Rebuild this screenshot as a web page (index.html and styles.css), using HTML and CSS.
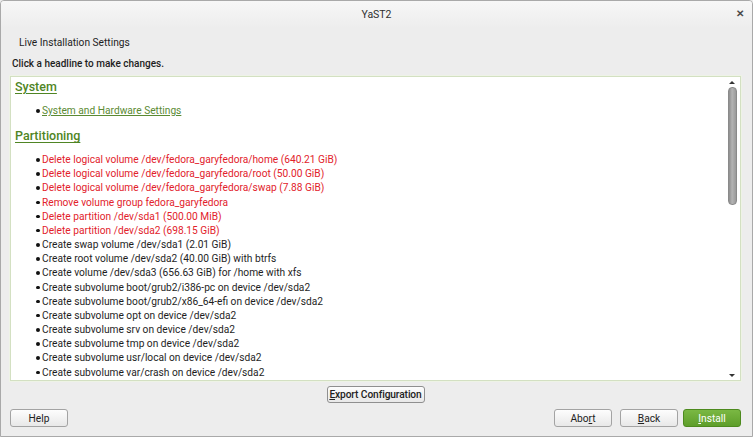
FILE: index.html
```html
<!DOCTYPE html>
<html lang="en">
    <head>
        <meta charset="UTF-8">
        <title>YaST2</title>
        <link rel="stylesheet" href="styles.css">
    </head>
    <body>

        <div class="window">

            <div class="titlebar">
                <span class="title">YaST2</span>
                <span class="close">&#x2715;</span>
            </div>

            <div class="main">
                <p class="subtitle">Live Installation Settings</p>
                <p class="hint">Click a headline to make changes.</p>

                <div class="summary">
                    <div class="summary_text">
                        <h2><a href="#">System</a></h2>
                        <ul>
                            <li><a href="#">System and Hardware Settings</a></li>
                        </ul>

                        <h2><a href="#">Partitioning</a></h2>
                        <ul>
                            <li class="danger">Delete logical volume /dev/fedora_garyfedora/home (640.21 GiB)</li>
                            <li class="danger">Delete logical volume /dev/fedora_garyfedora/root (50.00 GiB)</li>
                            <li class="danger">Delete logical volume /dev/fedora_garyfedora/swap (7.88 GiB)</li>
                            <li class="danger">Remove volume group fedora_garyfedora</li>
                            <li class="danger">Delete partition /dev/sda1 (500.00 MiB)</li>
                            <li class="danger">Delete partition /dev/sda2 (698.15 GiB)</li>
                            <li>Create swap volume /dev/sda1 (2.01 GiB)</li>
                            <li>Create root volume /dev/sda2 (40.00 GiB) with btrfs</li>
                            <li>Create volume /dev/sda3 (656.63 GiB) for /home with xfs</li>
                            <li>Create subvolume boot/grub2/i386-pc on device /dev/sda2</li>
                            <li>Create subvolume boot/grub2/x86_64-efi on device /dev/sda2</li>
                            <li>Create subvolume opt on device /dev/sda2</li>
                            <li>Create subvolume srv on device /dev/sda2</li>
                            <li>Create subvolume tmp on device /dev/sda2</li>
                            <li>Create subvolume usr/local on device /dev/sda2</li>
                            <li>Create subvolume var/crash on device /dev/sda2</li>
                        </ul>
                    </div>

                    <div class="scrollbar">
                        <span class="arrow_up"></span>
                        <span class="thumb"></span>
                        <span class="track"></span>
                        <span class="arrow_down"></span>
                    </div>
                </div>

                <div class="export_row">
                    <button class="btn btn_small"><u>E</u>xport Configuration</button>
                </div>

                <div class="footer">
                    <button class="btn">Help</button>
                    <div class="footer_right">
                        <button class="btn">Abo<u>r</u>t</button>
                        <button class="btn"><u>B</u>ack</button>
                        <button class="btn btn_install"><u>I</u>nstall</button>
                    </div>
                </div>
            </div>

        </div>

    </body>
</html>
```

FILE: styles.css
```css
* {
    margin: 0px;
    padding: 0px;
    box-sizing: border-box;
}

body {
    font-family: Roboto, "Liberation Sans", sans-serif;
    font-size: 10.2px;
    color: #1e1e1e;
    background-color: #ededed;
}

.window {
    width: 753px;
    height: 437px;
    border: 1px solid #a9a9a9;
    border-radius: 4px 4px 0 0;
    background-color: #ededed;
    overflow: hidden;
}

.titlebar {
    height: 27px;
    display: flex;
    align-items: center;
    justify-content: center;
    position: relative;
    background: linear-gradient(#f7f7f7, #ededed);
}

.title {
    font-size: 10.5px;
    color: #2e2e2e;
}

.close {
    position: absolute;
    right: 8px;
    top: 7px;
    font-size: 10px;
    font-weight: bold;
    color: #4a4a4a;
}

.main {
    padding: 0 11px 0 9px;
}

.subtitle {
    padding-left: 9px;
    line-height: 14px;
    margin-top: 8px;
}

.hint {
    font-size: 10px;
    font-weight: 500;
    padding-left: 2px;
    line-height: 14px;
    margin-top: 7px;
}

.summary {
    margin-top: 5px;
    height: 305px;
    border: 1px solid #d3e0c2;
    box-shadow: 0 0 0 1px #eef3e6;
    background-color: white;
    display: flex;
    overflow: hidden;
}

.summary_text {
    flex: 1;
    padding: 1px 0 0 4px;
}

.summary_text h2 {
    font-size: 12.5px;
    font-weight: 500;
    line-height: 18px;
}

.summary_text h2 a {
    color: #4f8524;
    text-decoration: underline;
    text-underline-offset: 2px;
}

.summary_text ul {
    padding-left: 27px;
    margin: 8px 0 9px 0;
    list-style: none;
}

.summary_text li {
    line-height: 14.15px;
    position: relative;
}

.summary_text li::before {
    content: "";
    position: absolute;
    left: -6px;
    top: 5px;
    width: 3.5px;
    height: 3.5px;
    border-radius: 2px;
    background-color: #111;
}

.summary_text li a {
    color: #5b8a33;
    text-decoration: underline;
}

.summary_text li.danger {
    color: #e2222b;
}

.scrollbar {
    width: 12px;
    margin-right: 2px;
    display: flex;
    flex-direction: column;
    align-items: center;
    padding: 4px 0 3px 0;
}

.arrow_up, .arrow_down {
    width: 0;
    height: 0;
    border-left: 3px solid transparent;
    border-right: 3px solid transparent;
}

.arrow_up {
    border-bottom: 3px solid #333;
}

.arrow_down {
    border-top: 3px solid #333;
}

.thumb {
    width: 9px;
    height: 118px;
    margin-top: 3px;
    border-radius: 4px;
    border: 1px solid #8a8a8a;
    background: linear-gradient(to right, #8e8e8e, #b4b4b4 45%, #9a9a9a);
}

.track {
    flex: 1;
}

.export_row {
    display: flex;
    justify-content: center;
    margin-top: 5px;
}

.btn {
    font-family: Roboto, "Liberation Sans", sans-serif;
    font-size: 10.2px;
    color: #222;
    width: 58px;
    height: 18px;
    border: 1px solid #a3a3a3;
    border-radius: 3px;
    background: linear-gradient(#fdfdfd, #e8e8e8);
}

.btn_small {
    width: 98px;
    height: 17px;
    padding: 0;
    white-space: nowrap;
    border-color: #8f8f8f;
    font-weight: 500;
    letter-spacing: -0.1px;
}

.btn_install {
    color: white;
    border-color: #4d8a1e;
    background: linear-gradient(#7ab843, #5e9e2a);
}

.footer {
    display: flex;
    justify-content: space-between;
    margin-top: 6px;
}

.footer_right {
    display: flex;
    gap: 8px;
}

.footer_right .btn_install {
    margin-left: -3px;
}
```
